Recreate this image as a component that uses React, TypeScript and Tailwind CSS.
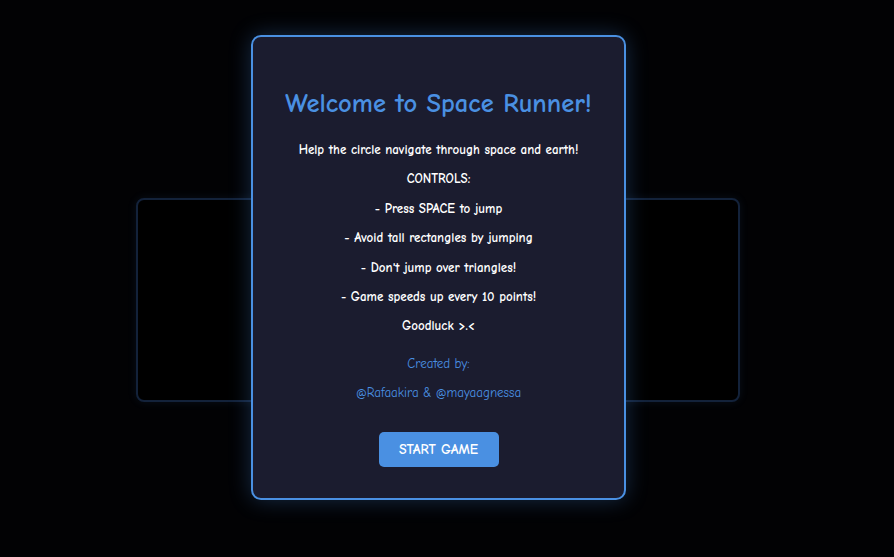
import React from 'react';

const lines = [
  'Help the circle navigate through space and earth!',
  'CONTROLS:',
  '- Press SPACE to jump',
  '- Avoid tall rectangles by jumping',
  "- Don't jump over triangles!",
  '- Game speeds up every 10 points!',
  'Goodluck >.<',
];

export default function App() {
  return (
    <div
      className="relative h-[557px] w-full overflow-hidden bg-[#020204]"
      style={{ fontFamily: '"Comic Sans MS", "Comic Neue", Lato, sans-serif' }}
    >
      {/* game canvas behind the start screen */}
      <div className="flex w-[876px] justify-center pt-[198px]">
        <div className="h-[204px] w-[604px] rounded-lg border-2 border-[#13223a] bg-black shadow-[0_0_10px_rgba(74,144,226,0.1)]" />
      </div>

      {/* start screen overlay */}
      <div className="absolute left-[251px] top-[35px] flex h-[465px] w-[375px] flex-col items-center rounded-[10px] border-2 border-[#4a90e2] bg-[#1b1c2f] pt-[51px] text-center shadow-[0_0_22px_rgba(74,144,226,0.3)]">
        <h1 className="text-[26.5px] font-bold leading-[32px] text-[#4a90e2]">Welcome to Space Runner!</h1>
        <div className="mt-[15px] flex flex-col">
          {lines.map((l) => (
            <p key={l} className="text-[13px] font-bold leading-[29.4px] text-white">
              {l}
            </p>
          ))}
        </div>
        <div className="mt-[8px] flex flex-col">
          <p className="text-[13px] leading-[29px] text-[#4a90e2]">Created by:</p>
          <p className="text-[13px] leading-[29px] text-[#4a90e2]">@Rafaakira &amp; @mayaagnessa</p>
        </div>
        <button
          type="button"
          className="mt-[25px] h-[35px] w-[120px] rounded-[5px] bg-[#4a90e2] text-[14px] font-bold text-white"
        >
          START GAME
        </button>
      </div>
    </div>
  );
}
